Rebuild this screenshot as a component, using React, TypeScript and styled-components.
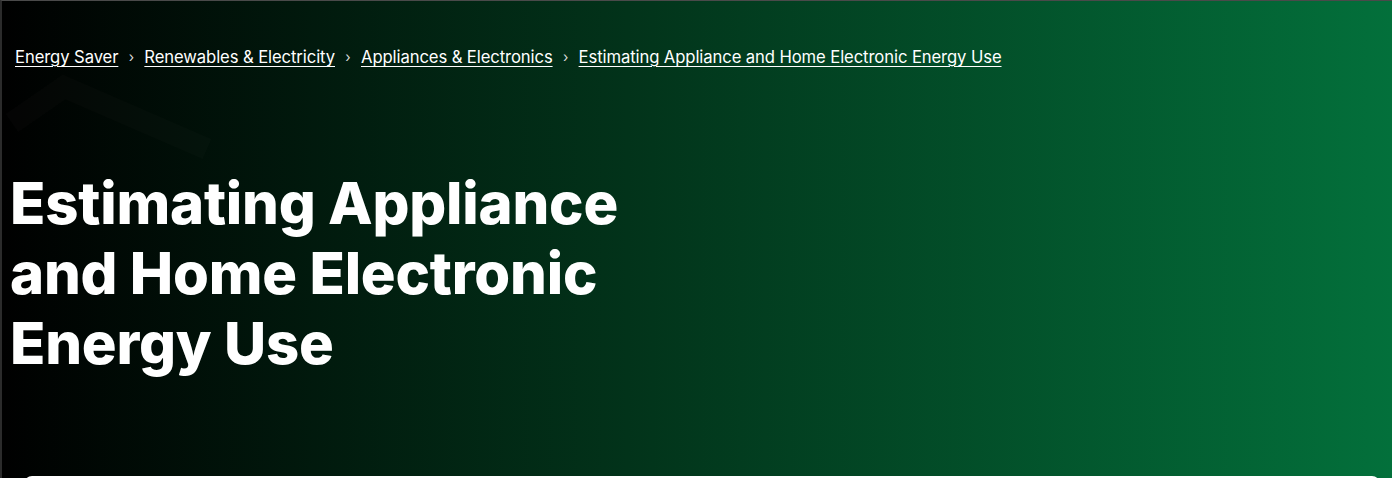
import styled, { createGlobalStyle } from "styled-components";

const GlobalStyle = createGlobalStyle`
  html, body {
    margin: 0;
    padding: 0;
    background: #ffffff;
  }
  body {
    font-family: Inter, "Liberation Sans", sans-serif;
    -webkit-font-smoothing: antialiased;
  }
`;

const Hero = styled.header`
  position: relative;
  box-sizing: border-box;
  height: 478px;
  overflow: hidden;
  border-top: 1px solid #4a4a4a;
  border-left: 2px solid #2b2b2b;
  background: linear-gradient(to right, #000000 0%, #02331a 45%, #03703b 100%);
  padding: 44px 0 0 8px;
  display: flex;
  flex-direction: column;
`;

const Decoration = styled.svg`
  position: absolute;
  left: 0;
  top: 60px;
  width: 260px;
  height: 120px;
  pointer-events: none;
`;

const Crumbs = styled.nav`
  display: flex;
  align-items: center;
  gap: 10px;
  padding-left: 5px;
  font-size: 16.65px;
  line-height: 24px;
`;

const Crumb = styled.a`
  color: #ffffff;
  text-decoration: underline;
  text-underline-offset: 3px;
  text-decoration-thickness: 1px;
  letter-spacing: -0.1px;
`;

const Sep = styled.span`
  color: #d9d9d9;
  font-size: 14px;
  display: inline-flex;
  width: 6px;
  justify-content: center;
`;

const Title = styled.h1`
  margin: 99px 0 0 0;
  max-width: 640px;
  color: #ffffff;
  font-weight: 800;
  font-size: 58px;
  line-height: 70px;
  letter-spacing: -0.2px;
`;

const Card = styled.div`
  position: absolute;
  left: 22px;
  right: 12px;
  top: 475px;
  height: 40px;
  background: #ffffff;
  border-radius: 8px;
`;

const crumbs = [
  "Energy Saver",
  "Renewables & Electricity",
  "Appliances & Electronics",
  "Estimating Appliance and Home Electronic Energy Use",
];

export default function App() {
  return (
    <>
      <GlobalStyle />
      <Hero>
        <Decoration viewBox="0 0 260 120">
          <path
            d="M10 62 L62 26 L205 88"
            fill="none"
            stroke="rgba(255,255,255,0.016)"
            strokeWidth="22"
          />
        </Decoration>
        <Crumbs>
          {crumbs.map((c, i) => (
            <>
              {i > 0 && <Sep key={"s" + i}>›</Sep>}
              <Crumb key={c} href="#">
                {c}
              </Crumb>
            </>
          ))}
        </Crumbs>
        <Title>
          Estimating Appliance
          <br />
          and Home Electronic
          <br />
          Energy Use
        </Title>
        <Card />
      </Hero>
    </>
  );
}
